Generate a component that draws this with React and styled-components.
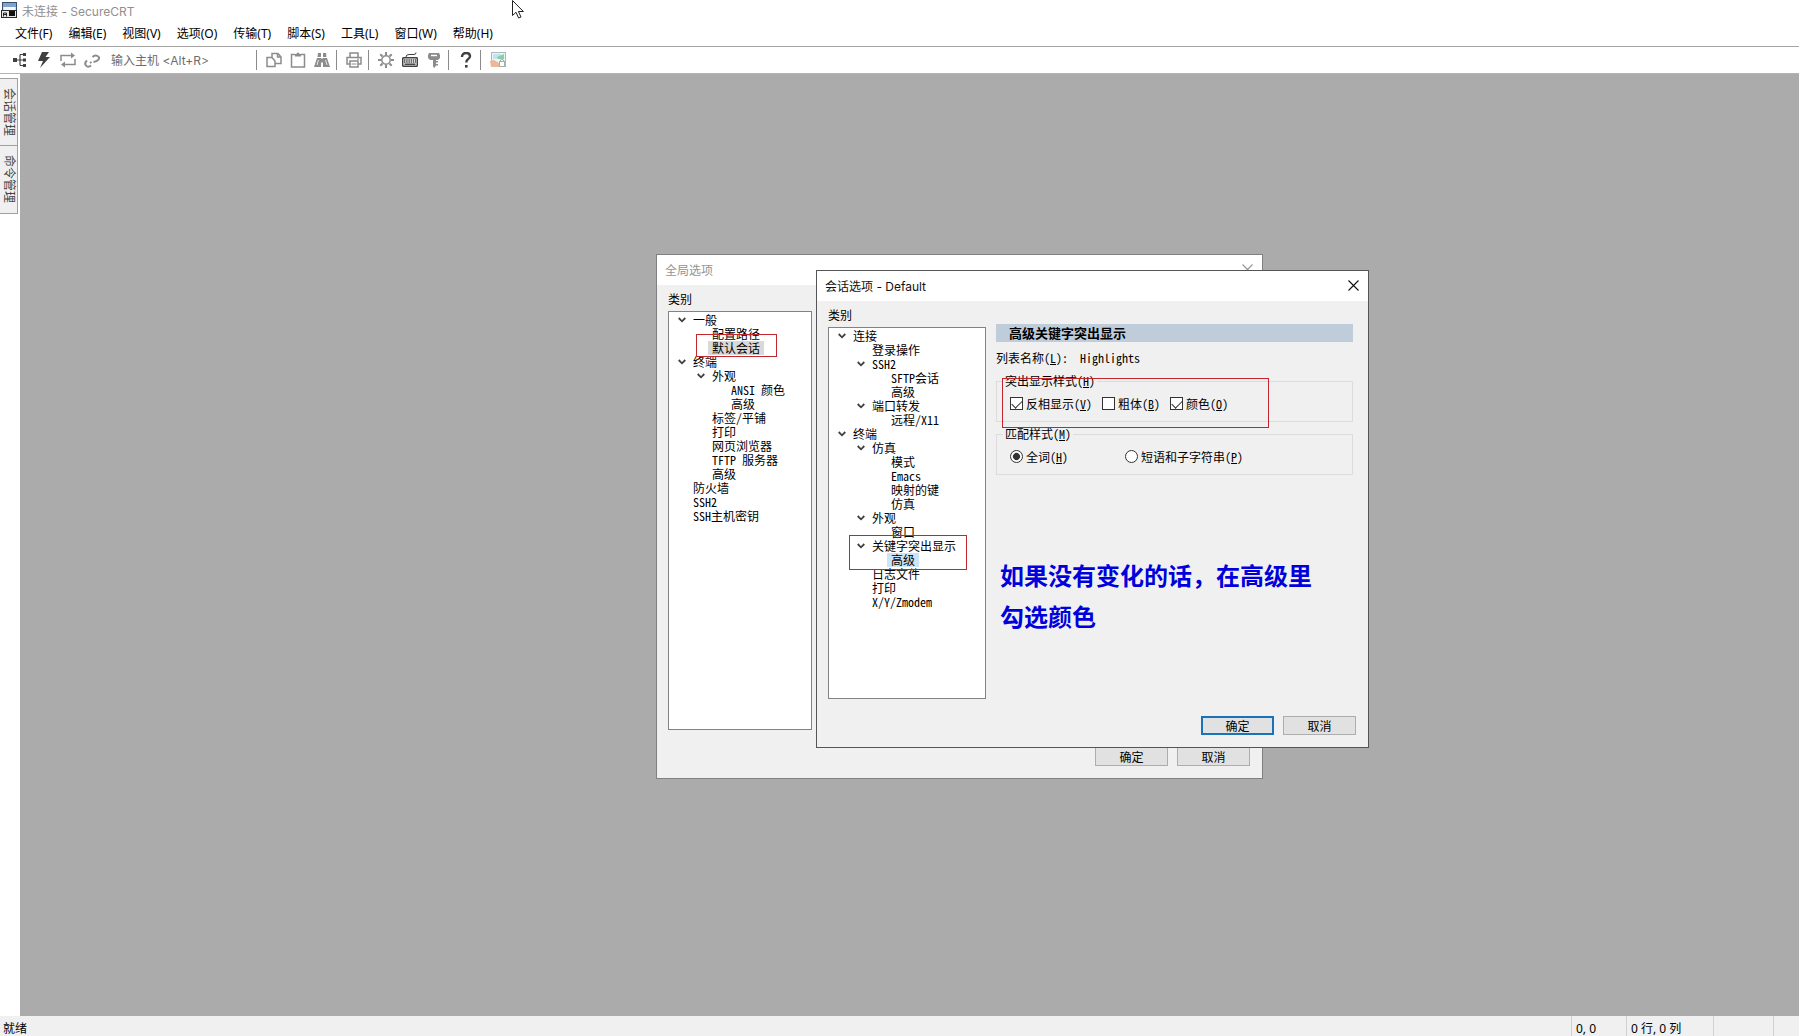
import { useState } from "react";
import styled, { createGlobalStyle, css } from "styled-components";

const uiFont = `"Noto Sans", "Noto Sans CJK SC", sans-serif`;
const titleFont = `Inter, "Noto Sans CJK SC", sans-serif`;
const dialogFont = `"Noto Sans Mono CJK SC", "Noto Sans CJK SC", monospace`;

const GlobalStyle = createGlobalStyle`
  * {
    box-sizing: border-box;
  }
  body {
    margin: 0;
    background: #fff;
    font-family: ${uiFont};
    font-size: 12px;
    color: #000;
  }
  button, input {
    font: inherit;
    color: inherit;
  }
`;

const plainButton = css`
  border: 0;
  padding: 0;
  margin: 0;
  background: none;
`;

const Shell = styled.div`
  position: relative;
  display: flex;
  flex-direction: column;
  min-height: 100vh;
  overflow: hidden;
`;

const TitleBar = styled.header`
  display: flex;
  align-items: center;
  gap: 5px;
  height: 20px;
  padding-left: 1px;
  color: #8f8f8f;
  font-family: ${titleFont};
`;

const AppTitle = styled.h1`
  margin: 0;
  font-size: 12px;
  font-weight: 400;
`;

const MenuBar = styled.nav`
  display: flex;
  gap: 16px;
  height: 27px;
  padding: 0 0 0 15px;
  border-bottom: 1px solid #a5a5a5;
`;

const MenuItem = styled.button`
  ${plainButton}
`;

const ToolBar = styled.div`
  display: flex;
  align-items: center;
  height: 27px;
  padding-left: 8px;
  border-bottom: 1px solid #b4b4b4;
`;

const ToolButton = styled.button`
  ${plainButton}
  display: flex;
  align-items: center;
  justify-content: center;
  width: 24px;
  height: 24px;
  color: ${({ strong }) => (strong ? "#404040" : "#8c8c8c")};
`;

const Separator = styled.span`
  width: 1px;
  height: 20px;
  margin: 0 5px 0 2px;
  background: #8c8c8c;
`;

const HostInput = styled.input`
  width: 150px;
  padding: 0 0 0 7px;
  border: 0;
  background: none;
  font-family: ${titleFont};
  &::placeholder {
    color: #6d6d6d;
    opacity: 1;
  }
`;

const Main = styled.main`
  display: flex;
  flex: 1;
`;

const SideBar = styled.aside`
  display: flex;
  flex-direction: column;
  align-items: flex-start;
  width: 20px;
  padding-top: 4px;
`;

const SideTab = styled.button`
  ${plainButton}
  writing-mode: vertical-rl;
  text-orientation: sideways;
  width: 18px;
  height: 68px;
  border: 1px solid #a0a0a0;
  border-left: 0;
  background: #f0f0f0;
  color: #444;
  line-height: 16px;
  & + & {
    border-top: 0;
  }
`;

const Workspace = styled.section`
  position: relative;
  flex: 1;
  background: #ababab;
`;

const StatusBar = styled.footer`
  display: flex;
  height: 20px;
  background: #f0f0f0;
  line-height: 26px;
`;

const StatusText = styled.span`
  flex: 1;
  padding-left: 3px;
`;

const StatusCell = styled.span`
  width: ${({ width }) => width}px;
  padding-left: 4px;
  border-left: 1px solid #d0d0d0;
`;

const Window = styled.section`
  position: absolute;
  left: ${({ x }) => x}px;
  top: ${({ y }) => y}px;
  width: ${({ width }) => width}px;
  border: 1px solid ${({ active }) => (active ? "#555" : "#808080")};
  background: #f0f0f0;
  font-family: ${dialogFont};
`;

const WindowTitle = styled.header`
  display: flex;
  align-items: center;
  justify-content: space-between;
  height: 30px;
  padding: 0 0 2px 8px;
  background: #fff;
  color: ${({ active }) => (active ? "#111" : "#949494")};
  font-family: ${titleFont};
`;

const CloseButton = styled.button`
  ${plainButton}
  display: flex;
  align-items: center;
  justify-content: center;
  width: 30px;
  height: 28px;
`;

const WindowBody = styled.div`
  display: flex;
  gap: 10px;
  padding: 0 15px 0 11px;
`;

const Caption = styled.h2`
  margin: 0;
  padding-top: 2px;
  font-size: 12px;
  font-weight: 400;
  line-height: 24px;
`;

const TreeList = styled.ul`
  width: ${({ width }) => width}px;
  min-height: ${({ height }) => height}px;
  margin: 0;
  padding: 1px 0;
  border: 1px solid #828282;
  background: #fff;
  list-style: none;
`;

const TreeRow = styled.li`
  display: flex;
  height: 14px;
  padding-left: ${({ level }) => level * 19 + 6}px;
`;

const Toggle = styled.button`
  ${plainButton}
  display: flex;
  align-items: center;
  justify-content: center;
  width: 14px;
  height: 14px;
`;

const Spacer = styled.span`
  width: 14px;
`;

const TreeLabel = styled.button`
  ${plainButton}
  padding: 0 4px;
  line-height: 14px;
  white-space: nowrap;
  background: ${({ fill }) => fill || "transparent"};
`;

const Pane = styled.div`
  flex: 1;
  padding-top: 23px;
`;

const PaneHeading = styled.h3`
  margin: 0;
  padding-left: 13px;
  background: #bfcddb;
  font-size: 13px;
  font-weight: 700;
  line-height: 18px;
`;

const ListName = styled.p`
  display: flex;
  gap: 12px;
  margin: 0;
  line-height: 32px;
`;

const Group = styled.fieldset`
  display: flex;
  gap: ${({ gap }) => gap}px;
  min-width: 0;
  margin: 0 0 5px;
  padding: 8px 13px 11px;
  border: 1px solid #dcdcdc;
`;

const Legend = styled.legend`
  margin-left: -7px;
  padding: 0 2px;
  line-height: 14px;
`;

const Option = styled.label`
  display: flex;
  align-items: center;
  gap: 3px;
  height: 14px;
  white-space: nowrap;
`;

const Check = styled.input`
  appearance: none;
  width: 13px;
  height: 13px;
  margin: 0;
  border: 1px solid #333;
  background: #fff;
  &:checked::before {
    content: "";
    display: block;
    width: 9px;
    height: 5px;
    margin: 2px 0 0 1px;
    border: solid #333;
    border-width: 0 0 1px 1px;
    transform: rotate(-45deg);
  }
`;

const Radio = styled(Check)`
  border-radius: 50%;
  &:checked::before {
    width: 7px;
    height: 7px;
    margin: 2px;
    border: 0;
    border-radius: 50%;
    background: #333;
  }
`;

const ButtonRow = styled.footer`
  display: flex;
  justify-content: flex-end;
  gap: 9px;
  padding: 17px 12px 12px;
`;

const PushButton = styled.button`
  width: 73px;
  height: 19px;
  padding: 0;
  border: ${({ primary }) => (primary ? "2px solid #1a73b8" : "1px solid #adadad")};
  background: #e1e1e1;
  line-height: 15px;
`;

const RedFrame = styled.div`
  position: absolute;
  left: ${({ x }) => x}px;
  top: ${({ y }) => y}px;
  width: ${({ w }) => w}px;
  height: ${({ h }) => h}px;
  border: 1px solid #c1272d;
  pointer-events: none;
`;

const Note = styled.p`
  position: absolute;
  left: 183px;
  top: 283px;
  margin: 0;
  color: #0000dc;
  font-family: "Noto Sans CJK SC", sans-serif;
  font-size: 24px;
  font-weight: 700;
  line-height: 41px;
  white-space: nowrap;
`;

const Pointer = styled.svg`
  position: absolute;
  left: 512px;
  top: 0;
`;

const menus = ["文件(F)", "编辑(E)", "视图(V)", "选项(O)", "传输(T)", "脚本(S)", "工具(L)", "窗口(W)", "帮助(H)"];

const globalTree = [
  { level: 0, text: "一般", open: true },
  { level: 1, text: "配置路径" },
  { level: 1, text: "默认会话", fill: "#d9d9d9" },
  { level: 0, text: "终端", open: true },
  { level: 1, text: "外观", open: true },
  { level: 2, text: "ANSI 颜色" },
  { level: 2, text: "高级" },
  { level: 1, text: "标签/平铺" },
  { level: 1, text: "打印" },
  { level: 1, text: "网页浏览器" },
  { level: 1, text: "TFTP 服务器" },
  { level: 1, text: "高级" },
  { level: 0, text: "防火墙" },
  { level: 0, text: "SSH2" },
  { level: 0, text: "SSH主机密钥" },
];

const sessionTree = [
  { level: 0, text: "连接", open: true },
  { level: 1, text: "登录操作" },
  { level: 1, text: "SSH2", open: true },
  { level: 2, text: "SFTP会话" },
  { level: 2, text: "高级" },
  { level: 1, text: "端口转发", open: true },
  { level: 2, text: "远程/X11" },
  { level: 0, text: "终端", open: true },
  { level: 1, text: "仿真", open: true },
  { level: 2, text: "模式" },
  { level: 2, text: "Emacs" },
  { level: 2, text: "映射的键" },
  { level: 2, text: "仿真" },
  { level: 1, text: "外观", open: true },
  { level: 2, text: "窗口" },
  { level: 1, text: "关键字突出显示", open: true },
  { level: 2, text: "高级", fill: "#cce4f7" },
  { level: 1, text: "日志文件" },
  { level: 1, text: "打印" },
  { level: 1, text: "X/Y/Zmodem" },
];

const Icon = ({ children, ...rest }) => (
  <svg width="16" height="16" viewBox="0 0 16 16" fill="none" stroke="currentColor" strokeWidth="1.5" {...rest}>
    {children}
  </svg>
);

const AppIcon = () => (
  <svg width="16" height="16" viewBox="0 0 16 16">
    <rect x="1.500" y=".5" width="14" height="11" fill="#cfdcec" stroke="#36506f" />
    <rect x="2" y="1" width="13" height="4" fill="#7fa3d1" />
    <rect x="3" y="5" width="11" height="3" fill="#f4f7fb" />
    <rect x=".5" y="8.500" width="15" height="7" fill="#e9e9e9" stroke="#2b2b2b" />
    <rect x="8" y="9" width="6" height="5" fill="#111" />
    <path d="M2.500 14.500V11h3v3.500M2.500 12.500h3" fill="none" stroke="#222" />
  </svg>
);

const SessionsIcon = () => (
  <Icon>
    <path d="M4 8h8M8 2.500v11M8 2.500h3M8 13.500h3" strokeWidth="1.200" />
    <path d="M1 6h4v4H1zM11 1h3v3h-3zM11 6.500h3v3h-3zM11 12h3v3h-3z" fill="currentColor" stroke="none" />
  </Icon>
);

const BoltIcon = () => (
  <Icon>
    <path d="M6 0h7L9.500 5H14L4 16l3-7H2z" fill="currentColor" stroke="none" />
  </Icon>
);

const ReconnectIcon = () => (
  <Icon>
    <path d="M1 9V3.500h11M15 7v5.500H4" />
    <path d="M11 .500l4 3-4 3zM5 9.500l-4 3 4 3z" fill="currentColor" stroke="none" />
  </Icon>
);

const UnlinkIcon = () => (
  <Icon strokeWidth="2">
    <path d="M7 13.500q-3 2.500-5 0t1-5M8.500 5q2.500-2.500 5-1t1 3.500-5 2.500M6 11l1.500-1" />
  </Icon>
);

const CopyIcon = () => (
  <Icon>
    <path d="M6 5V1.500h6L15 5v6.500H9.500M1 5.500h5L9 9v5.500H1zM11.500 1.500V5H15" />
  </Icon>
);

const PasteIcon = () => (
  <Icon>
    <path d="M5 2.500H1.500v12.500h13V2.500H11" />
    <path d="M5 4.500h6V2H9.500a1.500 1.500 0 0 0-3 0H5z" fill="currentColor" stroke="none" />
  </Icon>
);

const FindIcon = () => (
  <Icon>
    <path d="M4 1h3v4H3.500zM9 1h3l.5 4H9zM3 6h4v9H0zM9 6h4l3 9H9zM7 6.500h2v4H7z" fill="currentColor" stroke="none" />
    <path d="M4.500 8l-1.500 5M11.500 8l1.500 5" stroke="#fff" strokeWidth=".8" />
  </Icon>
);

const PrintIcon = () => (
  <Icon>
    <path d="M4 5V1h8v4M4 12H1V5.500h14V12h-3M4 9h8v6H4z" />
    <path d="M5.500 12h5M11 7.200h2" strokeWidth="1" />
  </Icon>
);

const GearIcon = () => (
  <Icon>
    <circle cx="8" cy="8" r="4.200" />
    <path d="M8 0v3M8 13v3M0 8h3M13 8h3M2.300 2.300l2.200 2.200M11.500 11.500l2.200 2.200M2.300 13.700l2.200-2.200M11.500 4.500l2.200-2.200" strokeWidth="2" />
  </Icon>
);

const KeyboardIcon = () => (
  <Icon>
    <path d="M4 5q0-2.500 3-2.500h5q2 0 2-2" strokeWidth="1" />
    <rect x=".7" y="5.700" width="14.600" height="8.600" rx="1" />
    <path d="M2 8h12M2 10h12" strokeDasharray="1.500 .700" strokeWidth="1.400" />
    <path d="M2.500 12.200h11" />
  </Icon>
);

const KeyIcon = () => (
  <Icon>
    <path d="M3 1h10l1 2v3l-2 2h-2v1h2v1.500h-2V12h2v1.500h-2L8.500 16 7 14.500V8H4L2 6V3z" fill="currentColor" stroke="none" />
    <path d="M5 3.500h6" stroke="#fff" strokeWidth="1.400" />
  </Icon>
);

const HelpIcon = () => (
  <Icon>
    <path d="M4 5q0-4 4.200-4 3.800 0 3.800 3.300 0 1.700-2 2.900-1.700 1-1.700 3.300" strokeWidth="2.400" />
    <rect x="7" y="13" width="2.600" height="2.600" fill="currentColor" stroke="none" />
  </Icon>
);

const PictureIcon = () => (
  <Icon>
    <rect x="1.500" y=".5" width="14" height="14" fill="#edf5f7" stroke="#a9b8bd" strokeWidth="1" />
    <rect x="3" y="2" width="8" height="5" fill="#c4e1ee" stroke="none" />
    <path d="M7 5l7-3v5H8z" fill="#89cfa3" stroke="none" />
    <path d="M0 9l4-1 5 3v4H1z" fill="#e9b99a" stroke="none" />
    <rect x="9.500" y="9.500" width="5" height="5" fill="#fff" stroke="#9fb1a8" strokeWidth="1" />
    <path d="M10.500 9.500V8q1.500-2 3 0v1.500" stroke="#9fb1a8" strokeWidth="1" />
  </Icon>
);

const CloseIcon = () => (
  <svg width="11" height="11" viewBox="0 0 11 11" stroke="currentColor" strokeWidth="1.100">
    <path d="M.5.5l10 10M10.500.5l-10 10" />
  </svg>
);

const tools = [
  { label: "复制", icon: CopyIcon },
  { label: "粘贴", icon: PasteIcon },
  { label: "查找", icon: FindIcon, end: true },
  { label: "打印", icon: PrintIcon, end: true },
  { label: "选项", icon: GearIcon },
  { label: "键映射", icon: KeyboardIcon, strong: true },
  { label: "密钥", icon: KeyIcon, end: true },
  { label: "帮助", icon: HelpIcon, strong: true, end: true },
  { label: "图片", icon: PictureIcon },
];

// "粗体(B)" -> the letter inside the brackets is underlined
const Mnemonic = ({ text }) => {
  const at = text.indexOf("(") + 1;
  return (
    <span>
      {text.slice(0, at)}
      <u>{text[at]}</u>
      {text.slice(at + 1)}
    </span>
  );
};

const Tree = ({ rows, width, height }) => (
  <TreeList width={width} height={height}>
    {rows.map((row, i) => (
      <TreeRow key={i} level={row.level}>
        {row.open ? (
          <Toggle aria-label={row.text}>
            <svg width="8" height="6" viewBox="0 0 8 6" fill="none" stroke="#404040" strokeWidth="1.800">
              <path d="M.7 1L4 4.300 7.300 1" />
            </svg>
          </Toggle>
        ) : (
          <Spacer />
        )}
        <TreeLabel fill={row.fill}>{row.text}</TreeLabel>
      </TreeRow>
    ))}
  </TreeList>
);

const GlobalOptions = () => (
  <Window x={636} y={180} width={607}>
    <WindowTitle>
      <span>全局选项</span>
      <CloseButton aria-label="关闭">
        <CloseIcon />
      </CloseButton>
    </WindowTitle>
    <WindowBody>
      <div>
        <Caption>类别</Caption>
        <Tree rows={globalTree} width={144} height={419} />
      </div>
    </WindowBody>
    <ButtonRow>
      <PushButton>确定</PushButton>
      <PushButton>取消</PushButton>
    </ButtonRow>
    <RedFrame x={39} y={79} w={81} h={23} />
  </Window>
);

const SessionOptions = () => {
  const [style, setStyle] = useState({ reverse: true, bold: false, color: true });
  const [match, setMatch] = useState("word");

  const toggle = (name) => setStyle({ ...style, [name]: !style[name] });

  return (
    <Window x={796} y={196} width={553} active>
      <WindowTitle active>
        <span>会话选项 - Default</span>
        <CloseButton aria-label="关闭">
          <CloseIcon />
        </CloseButton>
      </WindowTitle>
      <WindowBody>
        <div>
          <Caption>类别</Caption>
          <Tree rows={sessionTree} width={158} height={372} />
        </div>
        <Pane>
          <PaneHeading>高级关键字突出显示</PaneHeading>
          <ListName>
            <Mnemonic text="列表名称(L):" />
            <span>Highlights</span>
          </ListName>
          <Group gap={10}>
            <Legend>
              <Mnemonic text="突出显示样式(H)" />
            </Legend>
            <Option>
              <Check type="checkbox" checked={style.reverse} onChange={() => toggle("reverse")} />
              <Mnemonic text="反相显示(V)" />
            </Option>
            <Option>
              <Check type="checkbox" checked={style.bold} onChange={() => toggle("bold")} />
              <Mnemonic text="粗体(B)" />
            </Option>
            <Option>
              <Check type="checkbox" checked={style.color} onChange={() => toggle("color")} />
              <Mnemonic text="颜色(O)" />
            </Option>
          </Group>
          <Group gap={57}>
            <Legend>
              <Mnemonic text="匹配样式(M)" />
            </Legend>
            <Option>
              <Radio type="radio" name="match" checked={match === "word"} onChange={() => setMatch("word")} />
              <Mnemonic text="全词(H)" />
            </Option>
            <Option>
              <Radio type="radio" name="match" checked={match === "phrase"} onChange={() => setMatch("phrase")} />
              <Mnemonic text="短语和子字符串(P)" />
            </Option>
          </Group>
        </Pane>
      </WindowBody>
      <ButtonRow>
        <PushButton primary>确定</PushButton>
        <PushButton>取消</PushButton>
      </ButtonRow>
      <RedFrame x={32} y={264} w={118} h={35} />
      <RedFrame x={185} y={107} w={267} h={50} />
      <Note>
        如果没有变化的话，在高级里
        <br />
        勾选颜色
      </Note>
    </Window>
  );
};

const App = () => {
  const [host, setHost] = useState("");

  return (
    <Shell>
      <GlobalStyle />
      <TitleBar>
        <AppIcon />
        <AppTitle>未连接 - SecureCRT</AppTitle>
      </TitleBar>
      <MenuBar>
        {menus.map((menu) => (
          <MenuItem key={menu}>{menu}</MenuItem>
        ))}
      </MenuBar>
      <ToolBar>
        <ToolButton strong aria-label="会话"><SessionsIcon /></ToolButton>
        <ToolButton strong aria-label="快速连接"><BoltIcon /></ToolButton>
        <ToolButton aria-label="重新连接"><ReconnectIcon /></ToolButton>
        <ToolButton aria-label="断开"><UnlinkIcon /></ToolButton>
        <HostInput
          aria-label="输入主机"
          placeholder="输入主机 <Alt+R>"
          value={host}
          onChange={(e) => setHost(e.target.value)}
        />
        <Separator />
        {tools.map(({ label, icon: ToolIcon, strong, end }) => [
          <ToolButton key={label} strong={strong} aria-label={label}>
            <ToolIcon />
          </ToolButton>,
          end && <Separator key={label + "-end"} />,
        ])}
      </ToolBar>
      <Main>
        <SideBar>
          <SideTab>会话管理</SideTab>
          <SideTab>命令管理</SideTab>
        </SideBar>
        <Workspace>
          <GlobalOptions />
          <SessionOptions />
        </Workspace>
      </Main>
      <StatusBar>
        <StatusText>就绪</StatusText>
        <StatusCell width={55}>0, 0</StatusCell>
        <StatusCell width={87}>0 行, 0 列</StatusCell>
        <StatusCell width={60} />
        <StatusCell width={26} />
      </StatusBar>
      <Pointer width="13" height="19" viewBox="0 0 13 19" fill="#fff" stroke="#222">
        <path d="M.5.5v15l3.500-3.200 2.600 5.700 2.400-1-2.600-5.500h5z" />
      </Pointer>
    </Shell>
  );
};

export default App;
